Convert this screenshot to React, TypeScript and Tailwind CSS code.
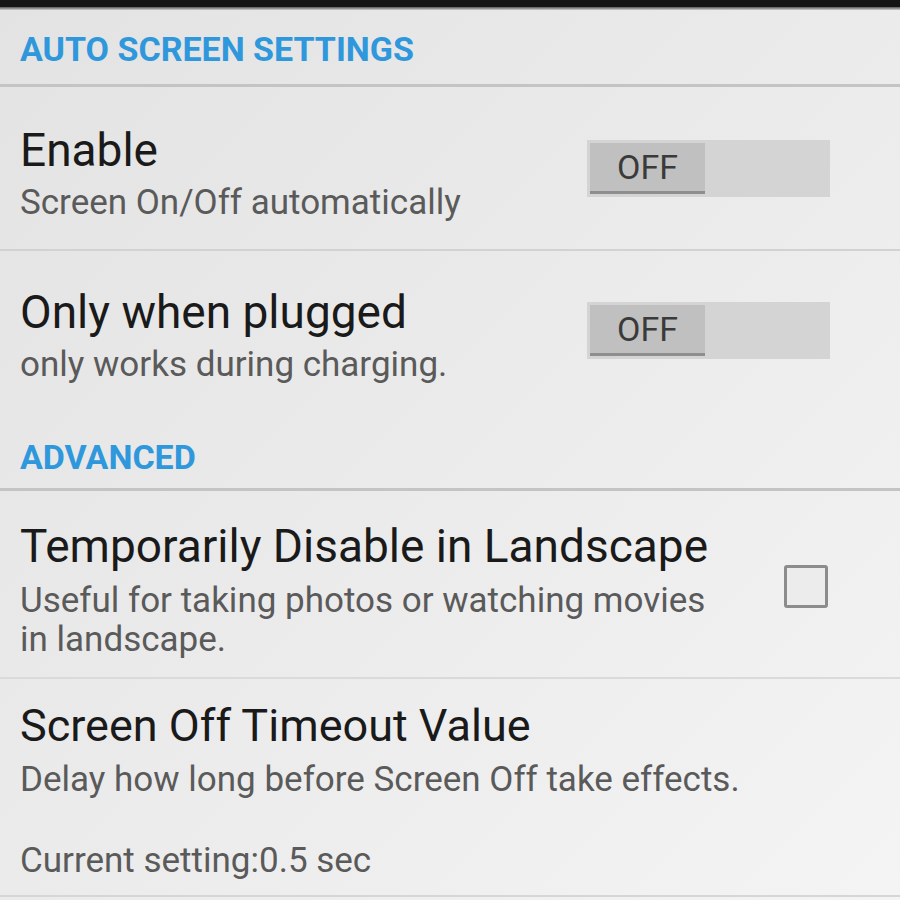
import React from "react";

const font = { fontFamily: "Roboto, 'Noto Sans', sans-serif" };

function Toggle() {
  return (
    <div className="flex h-[57px] w-[243px] bg-[#d4d4d4] p-[3px]">
      <div className="flex h-full w-[115px] items-center justify-center border-b-[3px] border-[#8e8e8e] bg-[#c0c0c0] text-[34px] leading-none text-[#3a3a3a]">
        OFF
      </div>
    </div>
  );
}

function Checkbox() {
  return <div className="h-[43px] w-[44px] rounded-[3px] border-[3px] border-[#8c8c8c] bg-[#ececec]" />;
}

export default function App() {
  return (
    <div
      style={font}
      className="flex h-[900px] w-[900px] flex-col overflow-hidden bg-gradient-to-br from-[#e3e3e3] via-[#ebebeb] to-[#f4f4f4]"
    >
      <div className="h-[7px] bg-[#151515]" />
      <div className="h-[3px] bg-gradient-to-b from-[#5a5a5a] to-[#cfcfcf]" />

      <div className="h-[74px] pl-[20px] pt-[19px] text-[34px] font-bold leading-[40px] text-[#2f98dc]">
        AUTO SCREEN SETTINGS
      </div>
      <div className="h-[3px] bg-[#c4c4c4]" />

      <div className="flex h-[162px] items-start justify-between pl-[20px] pr-[70px]">
        <div className="pt-[39px]">
          <div className="text-[46px] leading-[48px] text-[#1a1a1a]">Enable</div>
          <div className="mt-[10px] text-[35px] leading-[38px] text-[#5a5a5a]">Screen On/Off automatically</div>
        </div>
        <div className="pt-[53px]">
          <Toggle />
        </div>
      </div>
      <div className="h-[2px] bg-[#d2d2d2]" />

      <div className="flex h-[133px] items-start justify-between pl-[20px] pr-[70px]">
        <div className="pt-[37px]">
          <div className="text-[46px] leading-[48px] text-[#1a1a1a]">Only when plugged</div>
          <div className="mt-[10px] text-[35px] leading-[38px] text-[#5a5a5a]">only works during charging.</div>
        </div>
        <div className="pt-[51px]">
          <Toggle />
        </div>
      </div>

      <div className="h-[104px] pl-[20px] pt-[53px] text-[34px] font-bold leading-[40px] text-[#2f98dc]">
        ADVANCED
      </div>
      <div className="h-[3px] bg-[#c4c4c4]" />

      <div className="flex h-[186px] items-start justify-between pl-[20px] pr-[72px]">
        <div className="pt-[31px]">
          <div className="text-[46px] leading-[48px] text-[#1a1a1a]">Temporarily Disable in Landscape</div>
          <div className="mt-[11px] w-[715px] text-[35px] leading-[39px] text-[#5a5a5a]">
            Useful for taking photos or watching movies in landscape.
          </div>
        </div>
        <div className="pt-[74px]">
          <Checkbox />
        </div>
      </div>
      <div className="h-[2px] bg-[#dadada]" />

      <div className="flex h-[216px] flex-col pl-[20px]">
        <div className="pt-[23px] text-[45px] leading-[48px] text-[#1a1a1a]">Screen Off Timeout Value</div>
        <div className="mt-[11px] text-[35px] leading-[38px] text-[#5a5a5a]">Delay how long before Screen Off take effects.</div>
        <div className="mt-[43px] text-[35px] leading-[38px] text-[#5a5a5a]">Current setting:0.5 sec</div>
      </div>
      <div className="h-[2px] bg-[#d6d6d6]" />
    </div>
  );
}
